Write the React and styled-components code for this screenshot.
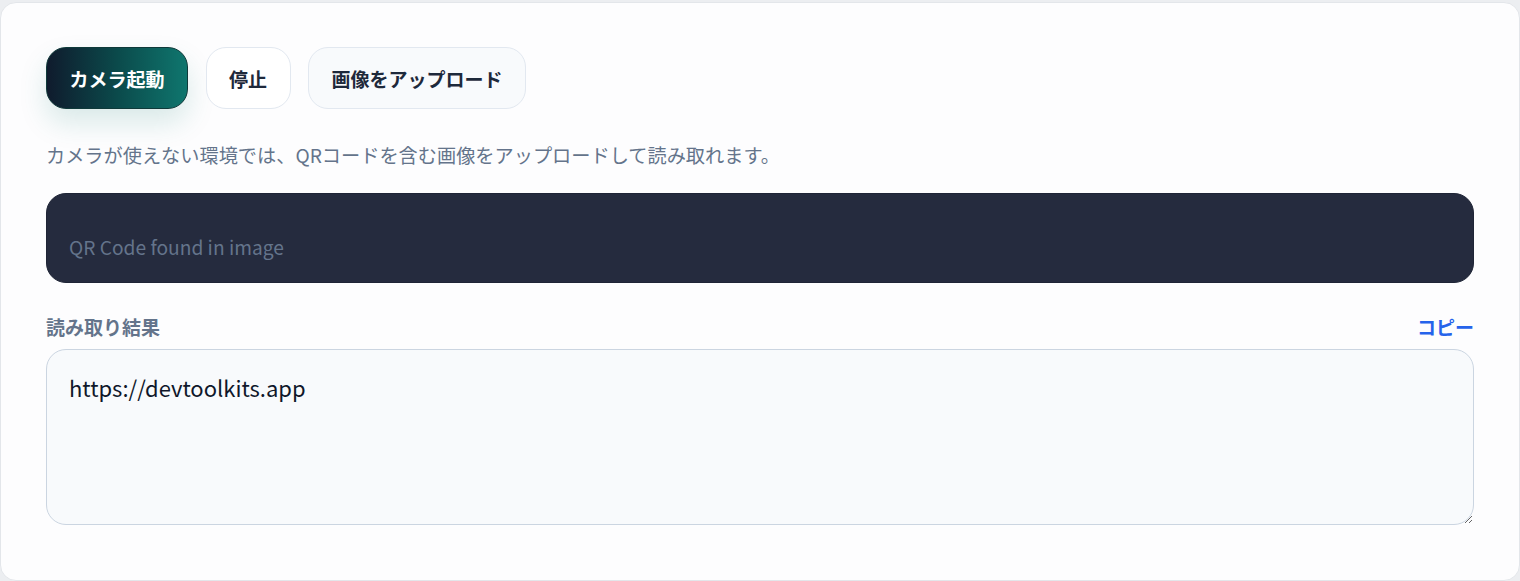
import styled, { createGlobalStyle } from 'styled-components'

const Global = createGlobalStyle`
  html, body {
    margin: 0;
    padding: 0;
    background: #eceef1;
  }
  body {
    font-family: "Noto Sans CJK JP", "Noto Sans", sans-serif;
  }
`

const Card = styled.section`
  box-sizing: border-box;
  margin-top: 2px;
  height: 579px;
  padding: 44px 45px 0;
  background: #fdfdfe;
  border: 1px solid #e3e6ea;
  border-radius: 16px;
  display: flex;
  flex-direction: column;
`

const Toolbar = styled.div`
  display: flex;
  gap: 17.5px;
`

const Button = styled.button`
  box-sizing: border-box;
  height: 62px;
  padding: 0 22.5px;
  border-radius: 20px;
  font-family: inherit;
  font-size: 19px;
  font-weight: 700;
  cursor: pointer;
  border: 1px solid ${(p) => (p.$variant === 'primary' ? '#0f3a3a' : '#e2e8f0')};
  color: ${(p) => (p.$variant === 'primary' ? '#ffffff' : '#1e293b')};
  background: ${(p) =>
    p.$variant === 'primary'
      ? 'linear-gradient(90deg, #0f1b2d 0%, #0b4a4b 50%, #0f766e 100%)'
      : p.$variant === 'soft'
      ? '#f8fafc'
      : '#ffffff'};
  box-shadow: ${(p) =>
    p.$variant === 'primary' ? '0 14px 28px rgba(15, 118, 110, 0.15)' : 'none'};
`

const Hint = styled.p`
  margin: 32px 0 0;
  font-size: 19.2px;
  line-height: 28px;
  color: #64748b;
`

const Preview = styled.div`
  box-sizing: border-box;
  margin-top: 24px;
  height: 90px;
  padding: 0 22px 21px;
  border-radius: 20px;
  background: #252b3e;
  border: 1px solid #1f2536;
  display: flex;
  align-items: flex-end;
  font-size: 19.2px;
  color: #64748b;
`

const ResultHead = styled.div`
  margin-top: 30px;
  display: flex;
  justify-content: space-between;
  align-items: center;
  height: 26px;
`

const Label = styled.span`
  font-size: 19px;
  font-weight: 700;
  color: #64748b;
`

const CopyButton = styled.button`
  padding: 0;
  border: none;
  background: none;
  font-family: inherit;
  font-size: 19px;
  font-weight: 700;
  color: #2563eb;
  cursor: pointer;
`

const Output = styled.textarea`
  box-sizing: border-box;
  margin-top: 10px;
  height: 176px;
  width: 100%;
  padding: 21px 22px;
  border: 1px solid #cbd5e1;
  border-radius: 20px;
  background: #f8fafc;
  font-family: inherit;
  font-size: 22px;
  line-height: 32px;
  color: #0f172a;
  resize: vertical;
  outline: none;
`

export default function App() {
  return (
    <>
      <Global />
      <Card>
        <Toolbar>
          <Button $variant="primary">カメラ起動</Button>
          <Button>停止</Button>
          <Button $variant="soft">画像をアップロード</Button>
        </Toolbar>
        <Hint>カメラが使えない環境では、QRコードを含む画像をアップロードして読み取れます。</Hint>
        <Preview>QR Code found in image</Preview>
        <ResultHead>
          <Label>読み取り結果</Label>
          <CopyButton>コピー</CopyButton>
        </ResultHead>
        <Output readOnly defaultValue="https://devtoolkits.app" />
      </Card>
    </>
  )
}
